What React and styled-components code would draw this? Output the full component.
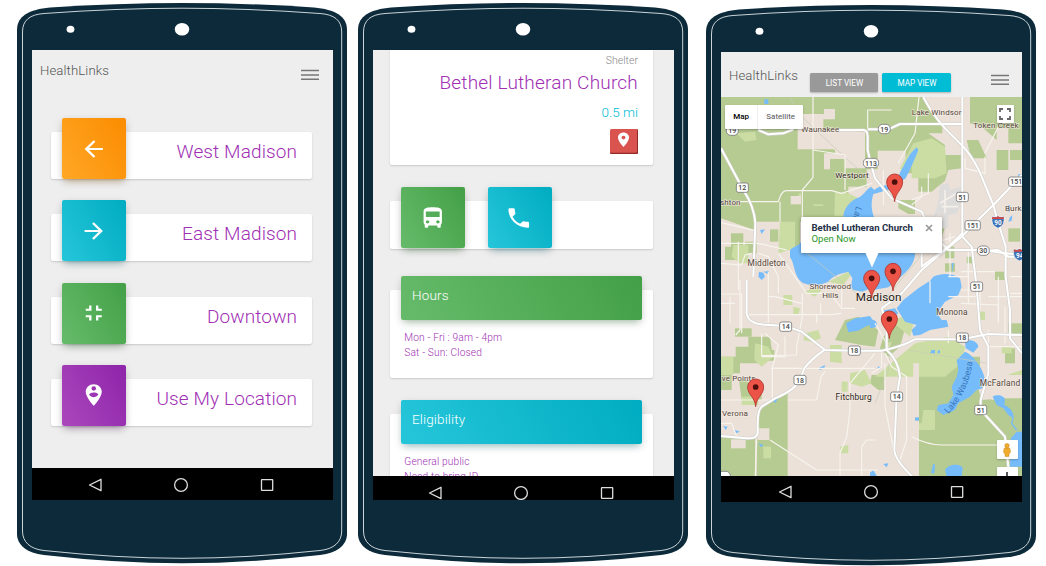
import React from 'react';
import styled, { createGlobalStyle } from 'styled-components';
import {
  MdArrowBack,
  MdArrowForward,
  MdFullscreenExit,
  MdPersonPinCircle,
  MdDirectionsBus,
  MdPhone,
  MdPlace,
} from 'react-icons/md';

const Global = createGlobalStyle`
  * { box-sizing: border-box; }
  body { margin: 0; background: #fff; font-family: Roboto, "Liberation Sans", sans-serif; font-weight: 300; overflow: hidden; }
`;

const gradients = {
  orange: 'linear-gradient(60deg, #ffa726, #fb8c00)',
  cyan: 'linear-gradient(60deg, #26c6da, #00acc1)',
  green: 'linear-gradient(60deg, #66bb6a, #43a047)',
  purple: 'linear-gradient(60deg, #ab47bc, #8e24aa)',
};
const glows = {
  orange: 'rgba(255,152,0,.3)',
  cyan: 'rgba(0,188,212,.3)',
  green: 'rgba(76,175,80,.3)',
  purple: 'rgba(156,39,176,.3)',
};

/* ---------- device ---------- */
const Stage = styled.main`
  display: flex;
  align-items: flex-start;
  width: 1046px;
  height: 566px;
  padding: 3px 0 0 17px;
`;
const Device = styled.section`
  display: grid;
  flex: none;
  width: 330px;
  height: 561px;
  margin: ${(p) => p.$drop || 0}px 0 0 ${(p) => p.$gap || 0}px;
`;
const Shell = styled.svg`
  grid-area: 1 / 1;
  width: 330px;
  height: 561px;
`;
const Screen = styled.div`
  grid-area: 1 / 1;
  display: flex;
  flex-direction: column;
  width: 301px;
  height: 449.5px;
  margin: 47.3px 0 0 15.2px;
  background: #eee;
  overflow: hidden;
  z-index: 1;
`;
const View = styled.div`
  flex: 1;
  min-height: 0;
  overflow: hidden;
`;
const NavBar = styled.footer`
  flex: none;
  height: ${(p) => p.$h}px;
  background: #000;
  display: flex;
  padding-left: ${(p) => p.$left}px;
  svg { display: block; margin-top: ${(p) => p.$top}px; overflow: hidden; }
`;

function Phone({ children, navHeight, navTop, navLeft, gap, drop }) {
  return (
    <Device $gap={gap} $drop={drop}>
      <Shell viewBox="0 0 330 561">
        <path
          fill="#0c2a3a"
          d="M0 27C0 13 12 6.500 33 4.500Q100 0 165 0Q230 0 297 4.500C318 6.500 330 13 330 27V531C330 542 320 550 303 552Q230 560.300 165 560.300Q100 560.300 27 552C10 550 0 542 0 531Z"
        />
        <path
          fill="none"
          stroke="#dfe6ea"
          strokeWidth=".9"
          d="M5.500 29C5.500 17 13 11.500 27 10.500Q100 5.200 165 5.200Q230 5.200 303 10.500C317 11.500 324.700 17 324.700 29V528C324.700 539 317 546 303 547.500Q230 555.300 165 555.300Q100 555.300 27 547.500C13 546 5.500 539 5.500 528Z"
        />
        <ellipse cx="53.500" cy="26.300" rx="3.900" ry="3.500" fill="#fff" />
        <ellipse cx="165" cy="26.300" rx="7.200" ry="6.300" fill="#fff" />
      </Shell>
      <Screen>
        <View>{children}</View>
        <NavBar $h={navHeight} $top={navTop} $left={navLeft}>
          <svg width="190" height="18" fill="none" stroke="#ddd" strokeWidth="1.3">
            <path d="M15 3.300V14.700L3.500 9Z" strokeLinejoin="round" />
            <circle cx="95" cy="9" r="6.400" />
            <rect x="175.500" y="3.600" width="11.200" height="10.800" rx=".5" />
          </svg>
        </NavBar>
      </Screen>
    </Device>
  );
}

/* ---------- shared parts ---------- */
const TopBar = styled.header`
  display: flex;
  align-items: flex-start;
  height: ${(p) => p.$h}px;
  padding: ${(p) => p.$top}px 14.600px 0 7.800px;
`;
const Brand = styled.h1`
  flex: 1;
  margin: 0;
  font-size: 13.2px;
  line-height: 16px;
  font-weight: 300;
  letter-spacing: .1px;
  color: #555;
`;
const Burger = styled.svg`
  display: block;
  width: 18px;
  height: 12px;
  margin-top: ${(p) => p.$top}px;
`;
const Menu = ({ top }) => (
  <Burger $top={top} viewBox="0 0 18 12" stroke="#777" strokeWidth="1.500">
    <path d="M0 1.500H18M0 6H18M0 10.200H18" />
  </Burger>
);
const Tile = styled.div`
  flex: none;
  display: flex;
  align-items: center;
  justify-content: center;
  width: 64px;
  height: 61px;
  margin-top: -14px;
  padding-right: 1px;
  border-radius: 2px;
  color: #fff;
  background: ${(p) => gradients[p.$tone]};
  box-shadow: 0 3px 8px -1px rgba(0,0,0,.25), 0 5px 7px -4px ${(p) => glows[p.$tone]};
  svg { width: 27.500px; height: 26px; }
`;
const Card = styled.div`
  background: #fff;
  border-radius: 2px;
  box-shadow: 0 1px 2px rgba(0,0,0,.16);
`;

/* ---------- area picker ---------- */
const AreaList = styled.nav`
  display: flex;
  flex-direction: column;
  gap: 35.200px;
  padding: 14px 21px 0 19.300px;
`;
const AreaCard = styled(Card)`
  display: flex;
  justify-content: space-between;
  height: 47px;
  padding: 0 15px 0 11px;
`;
const AreaName = styled.span`
  padding-top: 8px;
  font-size: 19px;
  line-height: 24px;
  letter-spacing: .13px;
  color: #a02fb4;
`;
const areas = [
  ['West Madison', 'orange', MdArrowBack],
  ['East Madison', 'cyan', MdArrowForward],
  ['Downtown', 'green', MdFullscreenExit],
  ['Use My Location', 'purple', MdPersonPinCircle],
];

/* ---------- detail page ---------- */
const Detail = styled.div`
  padding: 0 21px 0 16.200px;
`;
const Summary = styled(Card)`
  display: flex;
  flex-direction: column;
  align-items: flex-end;
  height: 115px;
  padding: 4px 15.500px 0 0;
  border-radius: 0 0 2px 2px;
`;
const Kind = styled.span`
  font-size: 10.500px;
  line-height: 14px;
  color: #888;
`;
const Place = styled.h2`
  margin: 2.500px 0 0;
  font-size: 19px;
  line-height: 24px;
  font-weight: 300;
  letter-spacing: .2px;
  color: #a02fb4;
`;
const Distance = styled.span`
  margin-top: 9.500px;
  font-size: 13.500px;
  line-height: 16px;
  color: #00bcd4;
`;
const PinButton = styled.button`
  display: flex;
  justify-content: center;
  align-items: flex-start;
  width: 28px;
  height: 25.500px;
  margin: 8.500px 0 0;
  padding: 2.700px 0 0;
  border: 0;
  border-radius: 1.500px;
  background: #d9534f;
  box-shadow: inset -1px -1.200px 0 #922b28;
  color: #fff;
  svg { width: 19px; height: 17.500px; }
`;
const Actions = styled(Card)`
  display: flex;
  gap: 22.700px;
  height: 47.500px;
  margin-top: 36px;
  padding-left: 11.300px;
`;
const Info = styled(Card)`
  height: 88px;
  margin-top: ${(p) => p.$top}px;
  padding: 0 11.300px;
`;
const InfoHead = styled.h3`
  position: relative;
  top: -14.700px;
  height: 44.500px;
  margin: 0;
  padding: 11px 11px;
  font-size: 13.500px;
  line-height: 16px;
  font-weight: 300;
  letter-spacing: .15px;
  color: #fff;
  border-radius: 2px;
  background: ${(p) => gradients[p.$tone]};
  box-shadow: 0 3px 8px -1px rgba(0,0,0,.22), 0 5px 7px -4px ${(p) => glows[p.$tone]};
`;
const InfoText = styled.p`
  margin: -5px 0 0 3.300px;
  font-size: 10.200px;
  line-height: 15px;
  letter-spacing: .15px;
  color: #a02fb4;
`;

/* ---------- map page ---------- */
const Toggle = styled.button`
  width: ${(p) => p.$w}px;
  height: 18.500px;
  margin: 5.500px 0 0 4px;
  padding: 0;
  border: 0;
  border-radius: 1.500px;
  font: 400 8.200px/18px Roboto, sans-serif;
  color: #fff;
  background: ${(p) => (p.$on ? '#00bcd4' : '#999')};
  box-shadow: 0 1px 2px rgba(0,0,0,.25);
`;
const MapBrand = styled(Brand)`
  flex: 0 0 77.500px;
`;
const MapMenu = styled.div`
  margin-left: auto;
  margin-right: -1.800px;
`;
const MapPane = styled.div`
  position: relative;
  height: 379px;
  overflow: hidden;
`;
const MapSvg = styled.svg`
  display: block;
  width: 301px;
  height: 379px;
`;
const Switch = styled.div`
  position: absolute;
  left: 4px;
  top: 8px;
  display: flex;
  width: 78px;
  height: 24px;
  background: #fff;
  border-radius: 1px;
  box-shadow: 0 1px 2px rgba(0,0,0,.25);
  font-size: 8px;
  line-height: 24px;
  text-align: center;
  color: #555;
  font-weight: 400;
  b { width: 33px; border-right: 1px solid #eee; color: #000; font-weight: 500; }
  span { flex: 1; }
`;
const Control = styled.div`
  position: absolute;
  left: ${(p) => p.$x}px;
  top: ${(p) => p.$y}px;
  width: ${(p) => p.$w}px;
  height: ${(p) => p.$h}px;
  display: flex;
  justify-content: center;
  align-items: center;
  background: #fff;
  border-radius: 1px;
  box-shadow: 0 1px 2px rgba(0,0,0,.25);
`;
const Bubble = styled.div`
  position: absolute;
  left: 80px;
  top: 120px;
  width: 141px;
  height: 35.500px;
  padding: 4.500px 0 0 10.300px;
  background: #fff;
  border-radius: 1px;
  box-shadow: 0 1px 4px rgba(0,0,0,.4);
  font-size: 9.600px;
  line-height: 11px;
  color: #2a962a;
  font-weight: 400;
  b { display: block; color: #25304a; font-weight: 700; white-space: nowrap; }
`;
const BubbleClose = styled.svg`
  position: absolute;
  left: 124px;
  top: 7px;
  width: 8px;
  height: 8px;
`;
const BubbleTail = styled.svg`
  position: absolute;
  left: 63.500px;
  top: 35px;
  width: 14px;
  height: 16px;
`;

const water = '#76bcfb';
const green = '#b6cb92';
const lime = '#cbdda3';

const greens = [
  'M18 21H628L650 70L682 108V130H640L690 165V195H742V235L700 240L690 272L650 305H610V250H572V182H488V238H455V290H400V395H255V472H195V395H122L118 420L18 385Z',
  'M765 21H921V160H880V115H845V180H880V240H845V150L800 110L765 100Z',
  'M755 150H790L815 205H768Z', 'M885 180H921V210H885Z',
  'M48 430H85V470H62V510H30V470H48Z', 'M90 455H125V490H90Z', 'M165 418H190V455H165Z',
  'M60 715H110V740H60Z', 'M18 800H62V770H100V740H165L172 790L130 820H75V850H50V900H18Z',
  'M72 870H100V900H140V930H80Z', 'M130 955L218 905V1158H125V1060L130 1040Z', 'M18 1042H120V1158H18Z',
  'M610 820H700L730 790L780 860L800 930L860 925L921 920V1158H600Z',
  'M505 740L545 700L570 715L555 770L520 800L495 775Z',
  'M375 720L390 690L430 680L490 720L480 770L440 765L360 750Z',
  'M690 470H718V505H690Z', 'M690 520H720V545H690Z', 'M755 500H775V520H755Z',
  'M880 415H915V455H880Z', 'M870 775H900V820H870Z', 'M650 385H700L680 440H650Z',
  'M840 545H870V570H840Z', 'M550 330H600V372H580L550 355Z', 'M880 700H921V735H880Z',
  'M760 800H795V845H770Z', 'M150 780H178V812H120V785Z', 'M470 855H508V900H490L465 880Z',
];
const limes = [
  'M595 160L650 145L690 170L695 250L660 265H590V230L575 255L555 235Z',
  'M195 395H240V475L190 490Z', 'M360 305L400 310L430 325L400 345L390 378H358Z',
  'M65 130L120 125L125 150L90 155Z', 'M55 465H100V520H75L50 500Z',
  'M205 615H232V645H205Z', 'M235 650L255 655L250 675H235Z',
  'M270 730L310 720L318 745L290 755L265 750Z', 'M345 765H380V820L345 815Z',
  'M18 800H55V855H18Z', 'M120 760L160 770L175 800L140 830L118 810Z',
  'M80 920H130V945H80Z', 'M145 1070H168V1105H145Z', 'M380 875H398V905H380Z',
  'M405 850L450 840L470 880L440 890L405 880Z', 'M600 760L700 740L750 770L740 820L690 860H480L540 810Z',
  'M625 960H660V1020H595V1000H620Z', 'M270 605L300 590L320 600L300 620Z',
  'M375 1070L400 1065V1090H378Z', 'M340 575L400 545L410 552L385 585Z',
  'M860 770H890V790H860Z', 'M525 690L565 680L595 705L585 740Z',
  'M790 665H810V690H790Z', 'M860 860L921 840V855H860Z', 'M510 760L530 755L520 790Z',
  'M250 310H258V320H250Z', 'M295 343H325V348H295Z', 'M343 142L365 150L395 170L400 195L380 180L355 180Z',
];
const tans = [
  'M248 72H327V57H360V88H325V120H390L450 125V235H390V207H345V238H327V190H360V178H248Z',
  'M227 318H258V343H227Z', 'M690 30H717L705 75L690 60Z',
  'M48 1048H92V1075H48Z', 'M125 1015H163V1050H130Z', 'M595 820H612V1158H590Z',
  'M800 860L850 850L921 860V925H870L850 915L835 930L805 920Z',
];
const lakes = [
  'M225 480C240 465 260 470 262 440L385 382C385 365 395 340 425 325C445 320 450 300 468 290L478 300C500 280 520 290 530 285C550 275 550 250 565 230C580 200 585 190 605 172L610 180C600 205 588 235 572 265L550 280L520 300L475 312C465 345 470 380 490 400L600 440L600 490C600 530 560 560 520 592L475 600L460 598L442 605L415 600C405 590 410 580 412 565L400 545C370 552 350 560 340 575C320 585 290 590 262 578C235 560 240 520 225 502Z',
  'M545 655L565 630L610 595L645 572L655 560C680 548 715 550 735 565L740 590L730 615L690 635L665 670L680 690L695 690L700 710L645 720L615 735L595 737L590 720L605 705L570 695Z',
  'M393 700L420 685L465 678L480 700L450 710L430 722L400 727Z',
  'M465 690C480 685 492 700 482 712L465 715Z', 'M500 662L540 655L550 670L530 685L505 680Z',
  'M750 785C775 795 800 830 808 860L802 895L785 900L765 920L730 940L720 960L685 975L665 960L670 945L700 940L715 915L710 890L725 860L730 840L725 810Z',
  'M750 755C765 745 788 755 790 770L775 788L752 775Z',
  'M833 920C845 912 868 915 870 930L868 945C890 955 897 970 895 985L880 975L865 955L845 945Z',
  'M888 1045L905 1025H921V1130H885Z',
  'M690 1140C700 1120 740 1120 743 1135L740 1158H695Z',
  'M648 1150L655 1120L660 1125L658 1150Z', 'M310 835L330 825L328 835L315 840Z',
  'M132 545L145 548L150 560L140 570L130 560Z', 'M145 545L162 543L158 552Z',
  'M148 28H160V42H148Z', 'M135 420L150 418L140 432Z', 'M172 930L190 925L180 940Z',
  'M25 1008L38 1010L32 1020Z', 'M60 1020L75 1025L62 1030Z', 'M130 1060L145 1065L138 1072Z',
  'M600 982H612V992H600Z', 'M505 1122L520 1120L515 1132Z', 'M465 1148L475 1140L485 1158H465Z',
  'M885 382L892 375L890 392L880 395Z', 'M650 780H660V790H645Z', 'M668 782L675 780V790H668Z',
  'M710 520L716 518L713 550Z', 'M880 345H885V365H878Z', 'M925 253H910V262H921Z', 'M488 830H496V835H488Z', 'M276 738L285 733L280 742Z',
];
const streets = [
  'M294 21V262L262 300V382', 'M294 180L390 195V300', 'M18 335H190Q200 300 215 302H350L380 310L470 280', 'M195 335V395',
  'M18 398L120 422', 'M18 460H130L215 480', 'M458 115V60H530', 'M612 21L600 130L550 220', 'M810 200V250L750 235V205', 'M850 110L810 190',
  'M18 612H80V730', 'M75 570V720L62 735', 'M160 545V620H180L260 640', 'M160 620V700H120', 'M100 674H350L380 670', 'M190 490L240 560L275 610H345L380 655H420',
  'M262 610V680L245 770V795L140 797V730', 'M317 640V675', 'M245 835H172V930H18', 'M172 835H480', 'M480 790L405 880V960L395 1040L375 1090V1158',
  'M218 930H305L318 860L330 845', 'M18 1000H50L65 1040', 'M165 1050L305 1140H490', 'M440 1158V1070L455 1050H480', 'M125 1052L121 1158', 'M510 790L530 830L575 860V1050L555 1110',
  'M590 1040Q640 1065 680 1065H880', 'M500 780V830L470 850', 'M510 820V950L540 1100', 'M480 700L520 770',
  'M645 572V640', 'M700 620H790M820 620H921', 'M760 520V640M850 560V700M705 430V560', 'M738 545H840', 'M738 640L850 645V690',
  'M820 720V770H921', 'M822 800V870', 'M700 720V760', 'M760 480V560H700', 'M640 250V310L590 330', 'M590 345L620 320V290', 'M505 240V345', 'M740 600H795V660',
  'M18 520L80 525L90 495L110 490', 'M70 455V600M190 560V610M45 620V700', 'M305 675V700M380 600V650', 'M570 420L620 470L720 440', 'M130 490L160 500L190 560M18 640H60',
  'M150 730L190 765L170 840M210 740V800H140', 'M885 560H921M885 610H921M870 650V760',
];
const thinRail = ['M225 21L250 70L345 160L465 270', 'M480 940L520 840L525 790', 'M580 780L820 820', 'M640 470L500 640', 'M265 480L460 640'];
const highways = [
  'M18 175L45 225L85 300Q118 350 121 400L115 560', 'M95 570V670Q100 702 150 704L212 708L260 725L330 780L418 782H500Q560 770 600 748H740L820 732L921 735',
  'M330 778Q285 810 268 835L255 870Q240 900 180 925L140 950Q128 960 128 1000V1030Q125 1046 95 1045L18 1038',
  'M130 120L160 133L205 130L235 118M360 120H445Q458 120 458 140V180L467 219L480 265L530 325L620 365L650 430L700 480H805L870 490L921 495',
  'M458 118L520 118L555 102H740', 'M625 21Q650 70 690 115L750 175Q785 220 800 260L835 345L849 396L872 470V560L885 660V745L921 790',
  'M742 21V440L770 470L785 590L795 720L820 770V850L797 930V960L870 1040L883 1158', 'M921 255L835 345L773 406L740 440L690 480L620 540L560 610L500 655',
  'M742 430L700 470L620 530V460', 'M805 482L850 480L880 500H921', 'M500 655L515 700L515 780Q550 810 555 860L545 920L538 1080Q540 1110 590 1158',
];

const labels = [
  ['Waunakee', 316, 118, 24], ['Lake Windsor', 665, 66, 24], ['Token Creek', 843, 107, 24], ['Westport', 411, 257, 24],
  ['shton', 46, 336, 24], ['Middleton', 155, 520, 25], ['Shorewood', 346, 590, 24], ['Hills', 346, 615, 24], ['Monona', 711, 668, 25],
  ['Fitchburg', 416, 922, 25], ['McFarland', 855, 879, 25], ['ve Points', 71, 865, 24], ['Verona', 60, 970, 24], ['Burk', 895, 355, 24],
];
const darkLabels = ['Westport', 'Fitchburg'];
const shields = [
  ['19', 52, 122, 1], ['12', 82, 293], ['19', 508, 117, 1], ['113', 468, 219, 1], ['151', 904, 275], ['51', 742, 321], ['151', 773, 406],
  ['30', 805, 482, 1], ['51', 785, 590], ['14', 212, 710], ['18', 418, 782], ['18', 255, 870], ['18', 742, 743], ['14', 545, 920], ['51', 797, 960], ['', 28, 1158, 1],
];
const pins = [[539, 335], [534, 603], [470, 624], [523, 746], [122, 950]];

function CityMap() {
  return (
    <MapSvg viewBox="18 21 903 1137" preserveAspectRatio="none" fontFamily="Roboto, sans-serif" fontWeight="400">
      <rect x="18" y="21" width="903" height="1137" fill="#ebe1d9" />
      <g fill={green}>{greens.map((d) => <path key={d} d={d} />)}</g>
      <g fill={lime}>{limes.map((d) => <path key={d} d={d} />)}</g>
      <g fill="#ebe1d9">{tans.map((d) => <path key={d} d={d} />)}</g>
      <path fill="#dddcda" d="M675 285L700 280L705 300L740 290L735 350L725 370L700 375V415H675V370L655 385L668 345Z" />
      <g fill="none" stroke="#f4efea" strokeWidth="5">
        <path d="M690 300V370M675 340L725 310M680 350L730 350" />
      </g>
      <g fill={water}>{lakes.map((d) => <path key={d} d={d} />)}</g>
      <path d="M895 980L890 1000L905 1020" fill="none" stroke={water} strokeWidth="4" />
      <g fill="none" stroke="#c9cbb6" strokeWidth="2">{thinRail.map((d) => <path key={d} d={d} />)}</g>
      <g fill="none" stroke="#f7f4ee" strokeWidth="3.500" strokeLinejoin="round">{streets.map((d) => <path key={d} d={d} />)}</g>
      <g fill="none" stroke="#cfcfcb" strokeWidth="9.500" strokeLinejoin="round">{highways.map((d) => <path key={d} d={d} />)}</g>
      <g fill="none" stroke="#fff" strokeWidth="6" strokeLinejoin="round">{highways.map((d) => <path key={d} d={d} />)}</g>
      {shields.map(([t, x, y, round], i) => {
        const w = t.length > 2 ? 46 : 36;
        return (
          <g key={i}>
            <rect x={x - w / 2} y={y - 14} width={w} height="28" rx={round ? 13 : 6} fill="#fff" stroke="#777" strokeWidth="2.500" />
            <text x={x} y={y + 7.500} fontSize="21" fontWeight="500" textAnchor="middle" fill="#444">{t}</text>
          </g>
        );
      })}
      {[['90', 849, 396], ['94', 914, 494]].map(([t, x, y]) => (
        <g key={t}>
          <path d={`M${x - 17} ${y - 17}Q${x - 8} ${y - 13} ${x} ${y - 18}Q${x + 8} ${y - 13} ${x + 17} ${y - 17}Q${x + 24} ${y + 10} ${x} ${y + 19}Q${x - 24} ${y + 10} ${x - 17} ${y - 17}Z`} fill="#3f73b5" stroke="#fff" strokeWidth="2" />
          <path d={`M${x - 17} ${y - 16}Q${x - 8} ${y - 12} ${x} ${y - 17}Q${x + 8} ${y - 12} ${x + 17} ${y - 16}L${x + 18} ${y - 9}H${x - 18}Z`} fill="#cf4a4a" />
          <text x={x} y={y + 9} fontSize="19" fontWeight="700" textAnchor="middle" fill="#fff">{t}</text>
        </g>
      ))}
      <g textAnchor="middle" stroke="#f6f0e8" strokeWidth="4" strokeOpacity=".7" paintOrder="stroke" letterSpacing=".4">
        {labels.map(([t, x, y, s]) => (
          <text key={t} x={x} y={y + 8} fontSize={s} fill={darkLabels.includes(t) ? '#2e2520' : '#55463c'}>{t}</text>
        ))}
        <text x="491" y="633" fontSize="35" fill="#1f1a17">Madison</text>
      </g>
      <path id="waubesa" d="M700 972Q764 905 775 800" fill="none" />
      <text fontSize="27" fill="#3a79bd"><textPath href="#waubesa">Lake Waubesa</textPath></text>
      <text fontSize="27" fontStyle="italic" fill="#3a79bd" transform="translate(423 349) rotate(103)">Lake</text>
      {pins.map(([x, y]) => (
        <g key={x} transform={`translate(${x} ${y})`}>
          <path d="M0 0C-2 -28 -24 -36 -24 -59A24 24 0 0 1 24 -59C24 -36 2 -28 0 0Z" fill="#ec5448" stroke="#b0342c" strokeWidth="2.500" />
          <circle cy="-59" r="8.500" fill="#4d0f0c" />
        </g>
      ))}
    </MapSvg>
  );
}

export default function App() {
  return (
    <>
      <Global />
      <Stage>
        <Phone navHeight={31.5} navTop={7.7} navLeft={54.3}>
          <TopBar $h={68} $top={13}>
            <Brand>HealthLinks</Brand>
            <Menu top={6} />
          </TopBar>
          <AreaList>
            {areas.map(([name, tone, Icon]) => (
              <AreaCard key={name}>
                <Tile $tone={tone}><Icon preserveAspectRatio="none" /></Tile>
                <AreaName>{name}</AreaName>
              </AreaCard>
            ))}
          </AreaList>
        </Phone>

        <Phone navHeight={24} navTop={8} navLeft={52.6} gap={11.3}>
          <Detail>
            <Summary>
              <Kind>Shelter</Kind>
              <Place>Bethel Lutheran Church</Place>
              <Distance>0.5 mi</Distance>
              <PinButton aria-label="Directions"><MdPlace preserveAspectRatio="none" /></PinButton>
            </Summary>
            <Actions>
              <Tile $tone="green"><MdDirectionsBus preserveAspectRatio="none" /></Tile>
              <Tile $tone="cyan"><MdPhone preserveAspectRatio="none" /></Tile>
            </Actions>
            <Info $top={41.5}>
              <InfoHead $tone="green">Hours</InfoHead>
              <InfoText>Mon - Fri : 9am - 4pm<br />Sat - Sun: Closed</InfoText>
            </Info>
            <Info $top={36.2}>
              <InfoHead $tone="cyan">Eligibility</InfoHead>
              <InfoText>General public<br />Need to bring ID</InfoText>
            </Info>
          </Detail>
        </Phone>

        <Phone navHeight={26} navTop={7.7} navLeft={54.8} gap={17.7} drop={2}>
          <TopBar $h={45} $top={15.5}>
            <MapBrand>HealthLinks</MapBrand>
            <Toggle $w={68}>LIST VIEW</Toggle>
            <Toggle $w={69} $on>MAP VIEW</Toggle>
            <MapMenu><Menu top={6} /></MapMenu>
          </TopBar>
          <MapPane>
            <CityMap />
            <Switch><b>Map</b><span>Satellite</span></Switch>
            <Control $x={275.5} $y={8} $w={17.5} $h={17.5}>
              <svg width="12" height="12" fill="none" stroke="#666" strokeWidth="1.800">
                <path d="M1 4V1H4M8 1H11V4M11 8V11H8M4 11H1V8" />
              </svg>
            </Control>
            <Bubble>
              <b>Bethel Lutheran Church</b>
              Open Now
              <BubbleClose viewBox="0 0 8 8" stroke="#999" strokeWidth="1.700">
                <path d="M1 1L7 7M7 1L1 7" />
              </BubbleClose>
              <BubbleTail viewBox="0 0 14 16">
                <path d="M0 0L7 15.500L14 0Z" fill="#fff" />
              </BubbleTail>
            </Bubble>
            <Control $x={276} $y={343} $w={20.5} $h={19}>
              <svg width="10" height="14" viewBox="0 0 10 14" fill="#f2ac2c" stroke="#b87a16" strokeWidth=".4">
                <path d="M2 5.500Q5 4 8 5.500L8.500 9.500L7.300 10L6.800 13.500H3.200L2.700 10L1.500 9.500Z" />
                <circle cx="5" cy="2.700" r="2.300" />
              </svg>
            </Control>
            <Control $x={276} $y={369.5} $w={20.5} $h={20}>
              <svg width="10" height="10" stroke="#555" strokeWidth="2"><path d="M5 0V10M0 5H10" /></svg>
            </Control>
          </MapPane>
        </Phone>
      </Stage>
    </>
  );
}
